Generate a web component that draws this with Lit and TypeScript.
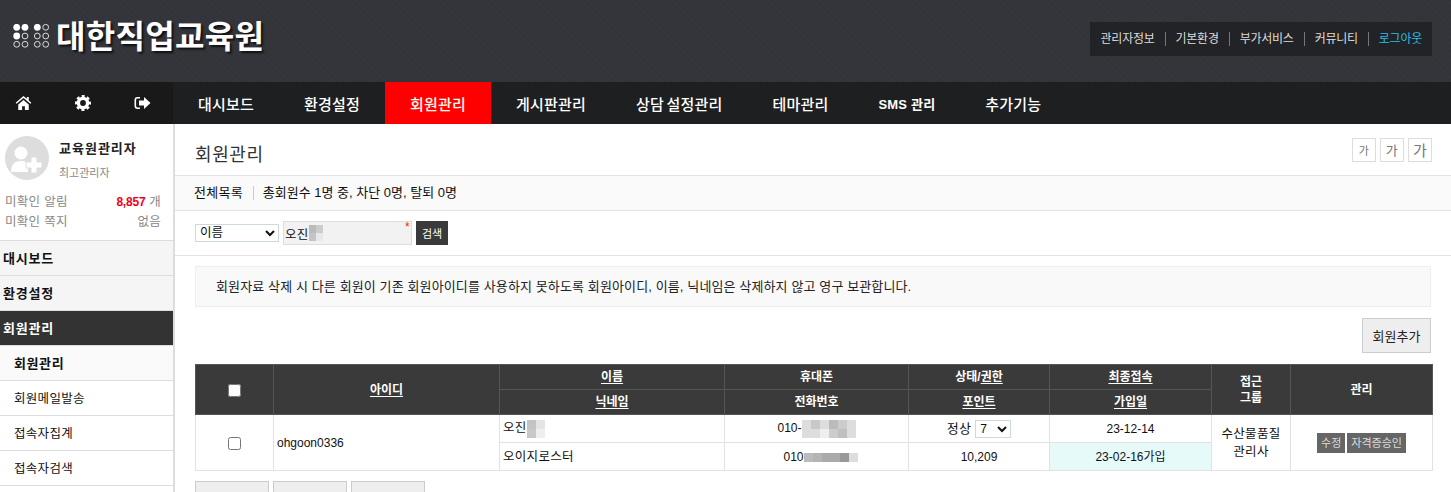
import { LitElement, css, html, svg } from "lit";
import { customElement } from "lit/decorators.js";

const topLinks = ["관리자정보", "기본환경", "부가서비스", "커뮤니티"];
const navItems = ["대시보드", "환경설정", "회원관리", "게시판관리", "상담 설정관리", "테마관리", "SMS 관리", "추가기능"];
const sideItems = [
  { label: "대시보드", kind: "root" },
  { label: "환경설정", kind: "root" },
  { label: "회원관리", kind: "open" },
  { label: "회원관리", kind: "current" },
  { label: "회원메일발송", kind: "sub" },
  { label: "접속자집계", kind: "sub" },
  { label: "접속자검색", kind: "sub" },
];

// logo dots: 1 = filled, 0 = ring
const dots = [
  [1, 1, 1, 0],
  [1, 0, 0, 0],
  [0, 0, 0, 0],
];
const dotX = [4.7, 13, 25.3, 33.7];
const dotY = [3.3, 12, 20.3];

function mosaic(cols: number, cell: number, rowH: number, shades: string[]) {
  return html`<span class="mosaic" style="grid-template-columns: repeat(${cols}, ${cell}px); grid-auto-rows: ${rowH}px"
    >${shades.map((c) => html`<i style="background: ${c}"></i>`)}</span
  >`;
}

@customElement("app-root")
export class AppRoot extends LitElement {
  static override styles = css`
    :host {
      display: block;
      height: 492px;
      overflow: hidden;
      background: #fff;
      color: #111;
      font-family: "Liberation Sans", "Noto Sans CJK KR", sans-serif;
      font-size: 12.5px;
      letter-spacing: 0.3px;
    }

    a {
      color: inherit;
      text-decoration: none;
    }

    .top {
      display: flex;
      align-items: flex-start;
      justify-content: space-between;
      height: 82px;
      padding: 22px 19px 0 12px;
      box-sizing: border-box;
      background: #33343a repeating-linear-gradient(45deg, rgba(255, 255, 255, 0.012) 0 2px, transparent 2px 4px);
    }

    .brand {
      display: flex;
      align-items: flex-start;
      gap: 4px;
      color: #fff;
      font-size: 32px;
      font-weight: 700;
      letter-spacing: 0.3px;
      text-shadow: 2px 2px 2px #111;
      line-height: 30px;
    }

    .brand svg {
      margin-top: 2px;
    }

    .toplinks {
      display: flex;
      align-items: center;
      height: 34px;
      padding: 0 10px 0 11px;
      background: #222326;
      color: #ddd;
      font-size: 12px;
      letter-spacing: -0.25px;
      line-height: 14px;
    }

    .toplinks a + a {
      margin-left: 10px;
      padding-left: 10px;
      border-left: 1px solid #777;
    }

    .toplinks .out {
      color: #2ebdea;
    }

    .nav {
      display: flex;
      height: 42px;
      background: #1e1f21;
    }

    .quick {
      display: flex;
      align-items: center;
      gap: 43px;
      width: 173px;
      box-sizing: border-box;
      padding-left: 15px;
      background: #191919;
    }

    .menu {
      display: flex;
    }

    .menu a {
      display: flex;
      align-items: center;
      justify-content: center;
      padding: 0 25px;
      color: #fff;
      font-size: 15px;
      font-weight: 500;
      letter-spacing: 0.2px;
      word-spacing: -2px;
    }

    .menu a.on {
      background: #ff0000;
      color: #ffe;
    }

    .menu a.sms {
      font-size: 13px;
      font-weight: 700;
      word-spacing: 0;
    }

    .body {
      display: flex;
    }

    .side {
      flex: none;
      width: 173px;
      height: 368px;
      border-right: 2px solid #ddd;
    }

    .profile {
      height: 117px;
      box-sizing: border-box;
      padding: 12px 12px 0 5px;
      border-bottom: 1px solid #ddd;
      color: #888;
    }

    .who {
      display: flex;
      gap: 10px;
      height: 44px;
      margin-bottom: 12px;
    }

    .who b {
      display: block;
      margin: 2px 0 7px;
      color: #222;
      font-size: 13px;
      letter-spacing: 1px;
    }

    .who small {
      font-size: 11px;
      letter-spacing: 0;
    }

    .stat {
      display: flex;
      justify-content: space-between;
      height: 20px;
      line-height: 20px;
    }

    .stat b {
      color: #f00018;
      font-size: 12px;
      letter-spacing: -0.2px;
    }

    .side-item {
      display: flex;
      align-items: center;
      height: 32px;
      padding: 0 0 2px 3px;
      border-bottom: 1px solid #ddd;
      color: #111;
    }

    .side-item.root {
      background: #f5f5f5;
      font-size: 13px;
      font-weight: 700;
      letter-spacing: 0.8px;
    }

    .side-item.open {
      background: #333;
      color: #fff;
      font-size: 13px;
      font-weight: 700;
      letter-spacing: 0.8px;
    }

    .side-item.current {
      padding-left: 14px;
      background: #fafafa;
      font-size: 13px;
      font-weight: 700;
      letter-spacing: 0.6px;
    }

    .side-item.sub {
      padding-left: 14px;
    }

    .main {
      flex: 1;
      min-width: 0;
    }

    .title {
      display: flex;
      align-items: center;
      justify-content: space-between;
      height: 52px;
      padding: 0 19px 0 20px;
      box-sizing: border-box;
      border-bottom: 1px solid #e4e4e4;
    }

    .title h1 {
      margin: 6px 0 0;
      color: #333;
      font-size: 18px;
      font-weight: 400;
      letter-spacing: 0.6px;
    }

    .sizes {
      display: flex;
      gap: 4px;
    }

    .sizes span {
      display: flex;
      align-items: center;
      justify-content: center;
      width: 24px;
      height: 24px;
      box-sizing: border-box;
      border: 1px solid #ddd;
      color: #777;
    }

    .tabs {
      display: flex;
      align-items: center;
      height: 34px;
      padding-left: 19px;
      border-bottom: 1px solid #e4e4e4;
      background: #fafafa;
      font-size: 13px;
      letter-spacing: 0.25px;
      line-height: 14px;
    }

    .tabs span + span {
      margin-left: 10px;
      padding-left: 9px;
      border-left: 1px solid #ccc;
      letter-spacing: 0;
    }

    .search {
      display: flex;
      align-items: center;
      gap: 4px;
      height: 44px;
      padding-left: 20px;
      border-bottom: 1px solid #e4e4e4;
    }

    select {
      box-sizing: border-box;
      height: 18px;
      border: 1px solid #ced9de;
      border-radius: 0;
      background: #fff;
      color: #111;
      font: inherit;
      padding: 0;
    }

    .search select {
      width: 84px;
    }

    .field {
      position: relative;
      display: flex;
      align-items: center;
      width: 129px;
      height: 24px;
      box-sizing: border-box;
      padding-left: 1px;
      border: 1px solid #ddd;
      background: #f2f2f2;
    }

    .field em {
      position: absolute;
      top: -1px;
      right: 1px;
      color: #f22a00;
      font-style: normal;
      font-size: 12px;
      line-height: 12px;
    }

    .go {
      width: 32px;
      height: 24px;
      padding: 0;
      border: 0;
      background: #3a3a3a;
      color: #fff;
      font: inherit;
      font-size: 11px;
    }

    .content {
      padding: 10px 20px 0;
    }

    .notice {
      height: 41px;
      box-sizing: border-box;
      padding-left: 20px;
      border: 1px solid #eee;
      background: #f9f9f9;
      color: #222;
      font-size: 13px;
      letter-spacing: 0.12px;
      line-height: 39px;
    }

    .actions {
      display: flex;
      justify-content: flex-end;
      margin: 11px 0;
    }

    .btn {
      height: 35px;
      padding: 0;
      box-sizing: border-box;
      border: 1px solid #ccc;
      background: #eee;
      color: #222;
      font: inherit;
      font-size: 13px;
    }

    .actions .btn {
      width: 69px;
    }

    table {
      width: 1237px;
      table-layout: fixed;
      border-collapse: collapse;
    }

    th {
      height: 24px;
      padding: 0;
      border: 1px solid #555;
      background: #3a3a3a;
      color: #fff;
      font-size: 12px;
      font-weight: 700;
      letter-spacing: 0;
      line-height: 16px;
    }

    th u {
      text-underline-offset: 2px;
    }

    td {
      height: 27px;
      padding: 0;
      border: 1px solid #e2e2e2;
      text-align: center;
      line-height: 18px;
    }

    td.left {
      padding-left: 3px;
      text-align: left;
    }

    td.num {
      font-size: 12px;
      letter-spacing: 0;
    }

    td.nudge {
      padding-left: 8px;
    }

    td.joined {
      background: #e6fafa;
    }

    .row-select {
      display: inline-flex;
      align-items: center;
      gap: 4px;
      font-size: 13px;
    }

    .row-select select {
      width: 36px;
      font-size: 12px;
    }

    input[type="checkbox"] {
      width: 13px;
      height: 13px;
      margin: 0;
      vertical-align: middle;
    }

    .tag {
      display: inline-block;
      height: 20px;
      padding: 0 4px;
      background: #666;
      color: #ddd;
      font-size: 11px;
      letter-spacing: 0;
      line-height: 20px;
    }

    .tag + .tag {
      margin-left: 2px;
    }

    .more {
      display: flex;
      gap: 4px;
      margin-top: 10px;
    }

    .more .btn {
      width: 74px;
      height: 30px;
    }

    .mosaic {
      display: inline-grid;
      vertical-align: middle;
    }
  `;

  private renderLogo() {
    return html`<svg width="40" height="24" viewBox="0 0 40 24">
      ${dots.map((row, y) =>
        row.map((on, x) =>
          on
            ? svg`<circle cx=${dotX[x]} cy=${dotY[y]} r="3.4" fill="#fff" />`
            : svg`<circle cx=${dotX[x]} cy=${dotY[y]} r="2.9" fill="none" stroke="#ddd" stroke-width="1" />`,
        ),
      )}
    </svg>`;
  }

  override render() {
    return html`
      <header class="top">
        <div class="brand">${this.renderLogo()}<span>대한직업교육원</span></div>
        <div class="toplinks">
          ${topLinks.map((t) => html`<a>${t}</a>`)}
          <a class="out">로그아웃</a>
        </div>
      </header>
      <nav class="nav">
        <div class="quick">
          <svg width="17" height="14" viewBox="0 0 18 16" fill="#fff">
            <path d="M9 0 0 7.6l1.1 1.3L9 2.3l7.9 6.6L18 7.6l-3-2.5V1h-2.2v2.2zM3 9.6V16h4.4v-4.4h3.2V16H15V9.6L9 4.6z" />
          </svg>
          <svg width="16" height="16" viewBox="0 0 16 16">
            <circle cx="8" cy="8" r="4.6" fill="none" stroke="#fff" stroke-width="3.4" />
            <circle cx="8" cy="8" r="6.6" fill="none" stroke="#fff" stroke-width="2.8" stroke-dasharray="2.9 2.28" stroke-dashoffset="1.45" />
          </svg>
          <svg width="17" height="14" viewBox="0 0 16 14" fill="#fff">
            <path d="M5.5 1H3a3 3 0 0 0-3 3v6a3 3 0 0 0 3 3h2.5v-1.6H3A1.4 1.4 0 0 1 1.6 10V4A1.4 1.4 0 0 1 3 2.6h2.5z" />
            <path d="M9.5 1 16 7l-6.5 6V9.5H4.5v-5h5z" />
          </svg>
        </div>
        <div class="menu">
          ${navItems.map(
            (t) => html`<a class=${t === "회원관리" ? "on" : t.startsWith("SMS") ? "sms" : ""}>${t}</a>`,
          )}
        </div>
      </nav>
      <div class="body">
        <aside class="side">
          <div class="profile">
            <div class="who">
              <svg width="44" height="44" viewBox="0 0 44 44">
                <circle cx="22" cy="22" r="22" fill="#ddd" />
                <circle cx="16" cy="17" r="6.5" fill="#fff" />
                <path d="M6 36c0-8 4-11 10-11 3 0 5 .6 7 2v9z" fill="#fff" />
                <path d="M26 21h6v5h5v6h-5v5h-6v-5h-5v-6h5z" fill="#fff" stroke="#ddd" />
              </svg>
              <div><b>교육원관리자</b><small>최고관리자</small></div>
            </div>
            <div class="stat"><span>미확인 알림</span><span><b>8,857</b> 개</span></div>
            <div class="stat"><span>미확인 쪽지</span><span>없음</span></div>
          </div>
          ${sideItems.map((i) => html`<div class="side-item ${i.kind}">${i.label}</div>`)}
        </aside>
        <main class="main">
          <div class="title">
            <h1>회원관리</h1>
            <div class="sizes">
              <span style="font-size: 11px">가</span>
              <span style="font-size: 13px">가</span>
              <span style="font-size: 15px">가</span>
            </div>
          </div>
          <div class="tabs"><span>전체목록</span><span>총회원수 1명 중, 차단 0명, 탈퇴 0명</span></div>
          <div class="search">
            <select><option>이름</option></select>
            <div class="field">
              오진${mosaic(2, 7, 8, ["#bbb", "#ccc", "#c4c4c4", "#e8e8e8"])}
              <em>*</em>
            </div>
            <button class="go">검색</button>
          </div>
          <div class="content">
            <div class="notice">회원자료 삭제 시 다른 회원이 기존 회원아이디를 사용하지 못하도록 회원아이디, 이름, 닉네임은 삭제하지 않고 영구 보관합니다.</div>
            <div class="actions"><button class="btn">회원추가</button></div>
            <table>
              <colgroup>
                <col style="width: 78px" />
                <col style="width: 226px" />
                <col style="width: 225px" />
                <col style="width: 184px" />
                <col style="width: 141px" />
                <col style="width: 162px" />
                <col style="width: 79px" />
                <col style="width: 142px" />
              </colgroup>
              <thead>
                <tr>
                  <th rowspan="2"><input type="checkbox" /></th>
                  <th rowspan="2"><u>아이디</u></th>
                  <th><u>이름</u></th>
                  <th>휴대폰</th>
                  <th>상태/<u>권한</u></th>
                  <th><u>최종접속</u></th>
                  <th rowspan="2">접근<br />그룹</th>
                  <th rowspan="2">관리</th>
                </tr>
                <tr>
                  <th><u>닉네임</u></th>
                  <th>전화번호</th>
                  <th><u>포인트</u></th>
                  <th><u>가입일</u></th>
                </tr>
              </thead>
              <tbody>
                <tr>
                  <td rowspan="2"><input type="checkbox" /></td>
                  <td rowspan="2" class="left num">ohgoon0336</td>
                  <td class="left">오진${mosaic(2, 9, 9, ["#c4c4c4", "#e4e4e4", "#c8c8c8", "#eee"])}</td>
                  <td class="num">
                    010-${mosaic(6, 9, 9, ["#ddd", "#c8c8c8", "#ddd", "#bbb", "#ccc", "#ddd", "#ddd", "#ddd", "#eee", "#ccc", "#c0c0c0", "#ddd"])}
                  </td>
                  <td>
                    <span class="row-select">정상 <select><option>7</option></select></span>
                  </td>
                  <td class="num">23-12-14</td>
                  <td rowspan="2">수산물품질<br />관리사</td>
                  <td rowspan="2"><span class="tag">수정</span><span class="tag">자격증승인</span></td>
                </tr>
                <tr>
                  <td class="left">오이지로스터</td>
                  <td class="num nudge">010${mosaic(6, 9, 9, ["#bbb", "#b4b4b4", "#aaa", "#aaa", "#999", "#ddd"])}</td>
                  <td class="num">10,209</td>
                  <td class="num joined">23-02-16가입</td>
                </tr>
              </tbody>
            </table>
            <div class="more">
              <button class="btn"></button>
              <button class="btn"></button>
              <button class="btn"></button>
            </div>
          </div>
        </main>
      </div>
    `;
  }
}

declare global {
  interface HTMLElementTagNameMap {
    "app-root": AppRoot;
  }
}
